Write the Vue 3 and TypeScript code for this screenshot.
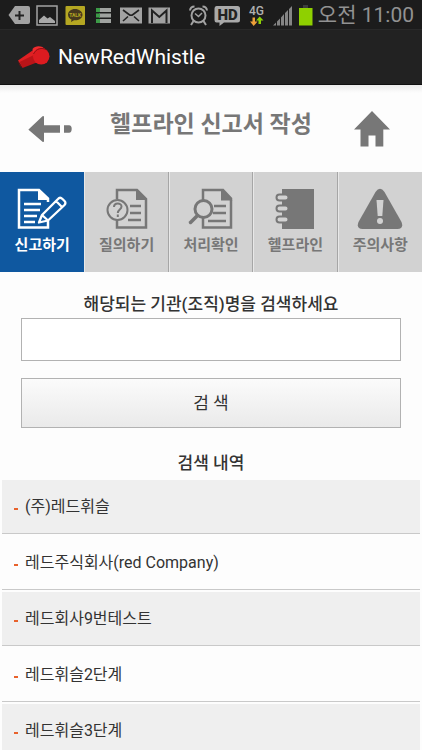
<script setup lang="ts">
import { ref } from 'vue'

type TabIcon = 'write' | 'question' | 'review' | 'notebook' | 'warning'

interface Tab {
  label: string
  icon: TabIcon
}

const tabs: Tab[] = [
  { label: '신고하기', icon: 'write' },
  { label: '질의하기', icon: 'question' },
  { label: '처리확인', icon: 'review' },
  { label: '헬프라인', icon: 'notebook' },
  { label: '주의사항', icon: 'warning' },
]

const results: string[] = [
  '(주)레드휘슬',
  '레드주식회사(red Company)',
  '레드회사9번테스트',
  '레드휘슬2단계',
  '레드휘슬3단계',
]

const activeTab = ref<TabIcon>('write')
const query = ref('')
</script>

<template>
  <div class="screen">
    <div class="status">
      <div class="status-left">
        <svg width="22" height="28" viewBox="8 0 22 28">
          <path d="M15 5H28Q30 5 30 7V21Q30 23 28 23H15L8.500 14Z" fill="#a2a2a2" />
          <path d="M19.500 10v9M15 14.500h9" stroke="#222" stroke-width="2" />
        </svg>
        <svg width="22" height="28" viewBox="36 0 22 28">
          <rect x="37" y="5" width="20" height="19" fill="none" stroke="#a2a2a2" stroke-width="1.500" />
          <path d="M39 22V19L44 14.500L47.500 17.500L50 16L55 20V22Z" fill="#a8a8a8" />
        </svg>
        <svg width="22" height="28" viewBox="64 0 22 28">
          <rect x="65.500" y="5" width="19.500" height="19" rx="1" fill="#b5a722" />
          <path d="M75 8C71 8 68 10.500 68 13.700C68 16 69.500 17.700 71.500 18.600L71 21L74 19.300C79 19.600 82.500 17 82.500 13.700C82.500 10.500 79 8 75 8Z" fill="#46391e" />
          <text x="75.200" y="16" class="talk" text-anchor="middle">TALK</text>
        </svg>
        <svg width="22" height="28" viewBox="92 0 22 28">
          <path d="M99 7h12v4H99zM99 12.500h12v4H99zM99 18h12v4H99z" fill="#a0a3a0" />
          <path d="M96 7h4v4h-4zM96 12.500h4v4h-4zM96 18h4v4h-4z" fill="#3d9b48" />
        </svg>
        <svg width="22" height="28" viewBox="120 0 22 28">
          <rect x="120" y="6.500" width="22" height="16" fill="#a2a2a2" />
          <path d="M123 9L129 13.500Q131 15 133 13.500L139 9M123 20L128 15.500M139 20L134 15.500" fill="none" stroke="#222" stroke-width="1.600" />
        </svg>
        <svg width="22" height="28" viewBox="148 0 22 28">
          <rect x="148.500" y="6.500" width="21.500" height="16" fill="#a2a2a2" />
          <path d="M152 22V9.500L159.300 16L166.500 9.500V22" fill="none" stroke="#222" stroke-width="2" />
        </svg>
      </div>
      <div class="status-right">
        <svg width="21" height="28" viewBox="190 0 21 28" fill="none" stroke="#a2a2a2">
          <circle cx="200.500" cy="14.500" r="7" stroke-width="2" />
          <path d="M192 9.500Q192.500 5.500 196.500 5.500M209 9.500Q208.500 5.500 204.500 5.500M195.500 20L193 24M205.500 20L208 24" stroke-width="2" />
          <path d="M197 12.500L200.500 15.500L204 12" stroke-width="1.500" />
        </svg>
        <svg width="27" height="28" viewBox="216 0 27 28">
          <path d="M218.500 5H239.500Q242 5 242 7.500V19Q242 21.500 239.500 21.500H226L221.500 25V21.500H218.500Q216.500 21.500 216.500 19V7.500Q216.500 5 218.500 5Z" fill="#a9a9a9" />
          <text x="229.500" y="19" class="hd" text-anchor="middle">HD</text>
        </svg>
        <svg width="21" height="28" viewBox="246 0 21 28">
          <text x="256.500" y="13.500" class="network" text-anchor="middle">4G</text>
          <path d="M252.500 16.500h2.500v4h2.500L253.700 25L250 20.500h2.500z" fill="#eda13a" />
          <path d="M258.500 23h2.500v-3.500h2.500L259.700 15.500L256 19.500h2.500z" fill="#8ed006" />
        </svg>
        <svg width="21" height="28" viewBox="274 0 21 28">
          <path d="M275 24.500L278 21.500V24.500ZM279 20.500L282 17.500V24.500H279ZM283 16.500L286 13V24.500H283ZM287 12L290 9V24.500H287ZM291 8L294 5V24.500H291Z" fill="#858585" />
        </svg>
        <svg width="15" height="28" viewBox="299 0 15 28">
          <path d="M304 4h5v3h-5z" fill="#3c3c3c" />
          <path d="M300 7h13.500v17.500H300z" fill="#8fd000" />
        </svg>
        <time class="clock">오전 11:00</time>
      </div>
    </div>

    <div class="appbar">
      <svg width="34" height="26" viewBox="16 0 34 26">
        <path d="M18 16.500L34 5.500L41 16L22 22.500Z" fill="#e02023" />
        <path d="M19.500 18L35 10.500L38 18L22.500 24Z" fill="#b91418" />
        <path d="M17.500 16.500L22.500 24L20 22Z" fill="#7d0c10" />
        <path d="M32.500 5C34.500 2 39 1.500 42.500 3L47 7L34 13Z" fill="#f12b2d" />
        <circle cx="41.200" cy="12.300" r="8.300" fill="#dc1b20" />
        <path d="M33.500 10C36 4.500 42 3 46.500 6" fill="none" stroke="#8f1014" />
      </svg>
      <span class="app-name">NewRedWhistle</span>
    </div>

    <main class="content">
      <header class="page-head">
        <button type="button" class="icon-button" aria-label="뒤로">
          <svg width="44" height="28" viewBox="0 0 44 28" fill="#777">
            <path d="M1 14L14.500 1.200Q16 .5 16 2V10.300H32V17.700H16V26Q16 27.500 14.500 26.800L.800 15Q0 14.500 1 14Z" />
            <path d="M36 10.300H41Q43.700 10.300 43.700 14Q43.700 17.700 41 17.700H36Z" />
          </svg>
        </button>
        <h1 class="page-title">헬프라인 신고서 작성</h1>
        <button type="button" class="icon-button" aria-label="홈">
          <svg width="36" height="36" viewBox="0 0 36 36" fill="#777">
            <path d="M18 0L36 18.500H29.300V35.500H21.500V24.500H14.500V35.500H6.500V18.500H0Z" />
          </svg>
        </button>
      </header>

      <nav class="tabs">
        <button
          v-for="tab in tabs"
          :key="tab.icon"
          type="button"
          class="tab"
          :class="{ active: tab.icon === activeTab }"
          @click="activeTab = tab.icon"
        >
          <svg v-if="tab.icon === 'write'" width="50" height="42" viewBox="0 0 50 42" fill="none" stroke="currentColor" stroke-width="2.500">
            <path d="M31 14V10.500L22 2H2V39.500H31V33" />
            <path d="M21 1L32 12H21Z" fill="currentColor" stroke="none" />
            <path d="M7 16H24M7 22H23M7 28H20M7 34H18" />
            <path d="M22 34.500L25 27L41 11Q43 8.500 45.500 11L47.500 13Q49.500 15 47 17.500L31 32.500ZM25 27L31 32.500M39 13L45 19" stroke-width="2.300" stroke-linejoin="round" />
          </svg>
          <svg v-else-if="tab.icon === 'question'" width="42" height="42" viewBox="0 0 42 42" fill="none" stroke="currentColor" stroke-width="2.500">
            <path d="M11 11V2H31L40 11V39.500H11V32" />
            <path d="M30 1L41 12H30Z" fill="currentColor" stroke="none" />
            <path d="M24 18H35M24 25H35M22 32H35" />
            <circle cx="11.500" cy="22" r="10" stroke-width="2" />
            <path d="M8 19C8 14.500 15.500 14.500 15.500 18.500C15.500 21.500 11.800 21.500 11.800 25M11.800 26.500V29" stroke-width="2" />
          </svg>
          <svg v-else-if="tab.icon === 'review'" width="46" height="42" viewBox="0 0 46 42" fill="none" stroke="currentColor" stroke-width="2.500">
            <path d="M15 12V2H35L43 10.500V39.500H15V29" />
            <path d="M33 1L44.500 12.500H33Z" fill="currentColor" stroke="none" />
            <path d="M26 18H38M25 25H38M20 33H38" />
            <circle cx="15.500" cy="21" r="8.500" stroke-width="3" />
            <path d="M9.500 27.500L2.500 34.500" stroke-width="3.500" stroke-linecap="round" />
          </svg>
          <svg v-else-if="tab.icon === 'notebook'" width="40" height="42" viewBox="0 0 40 42">
            <path d="M7 1H39V41H7Z" fill="currentColor" />
            <g fill="#d2d2d2" stroke="currentColor" stroke-width="2">
              <rect x="1.500" y="6.500" width="12" height="6" rx="3" />
              <rect x="1.500" y="17.500" width="12" height="6" rx="3" />
              <rect x="1.500" y="28.500" width="12" height="6" rx="3" />
            </g>
          </svg>
          <svg v-else width="46" height="42" viewBox="0 0 46 42">
            <path d="M18.500 4Q23 -2.500 27.500 4L44.500 34Q47 40.500 40.500 41H5.500Q-1 40.500 1.500 34Z" fill="currentColor" />
            <path d="M19.500 12H26.500L25.300 28H20.700Z" fill="#d2d2d2" />
            <circle cx="23" cy="33" r="3" fill="#d2d2d2" />
          </svg>
          <span>{{ tab.label }}</span>
        </button>
      </nav>

      <form class="search" @submit.prevent>
        <label class="caption" for="organization">해당되는 기관(조직)명을 검색하세요</label>
        <input id="organization" v-model="query" class="search-input" type="text" />
        <button type="submit" class="search-button">검 색</button>
      </form>

      <section>
        <h2 class="caption results-title">검색 내역</h2>
        <ul class="results">
          <li v-for="name in results" :key="name">
            <a href="#" class="result"><span class="dash"></span>{{ name }}</a>
          </li>
        </ul>
      </section>
    </main>
  </div>
</template>

<style>
body {
  margin: 0;
  background: #fdfdfd;
}
</style>

<style scoped>
.screen {
  display: flex;
  flex-direction: column;
  height: 100vh;
  overflow: hidden;
  font-family: Roboto, "Noto Sans CJK KR", sans-serif;
  color: #333;
}

button {
  font-family: inherit;
  margin: 0;
  cursor: pointer;
}

svg {
  display: block;
  flex: none;
}

.status {
  display: flex;
  flex: none;
  justify-content: space-between;
  align-items: center;
  box-sizing: border-box;
  height: 29px;
  padding: 0 8px;
  background: #1c1c1c;
}

.status-left {
  display: flex;
  gap: 6px;
}

.status-right {
  display: flex;
  align-items: center;
  gap: 5px;
}

.clock {
  font-size: 21px;
  line-height: 28px;
  color: #929292;
  white-space: nowrap;
}

.talk {
  font-size: 5px;
  font-weight: 700;
  fill: #b5a722;
}

.hd {
  font-size: 15px;
  font-weight: 900;
  fill: #222;
}

.network {
  font-size: 12px;
  font-weight: 500;
  fill: #b0b0b0;
}

.appbar {
  display: flex;
  flex: none;
  align-items: center;
  gap: 8px;
  box-sizing: border-box;
  height: 56px;
  padding: 0 16px;
  border-top: 1px solid #292929;
  border-bottom: 1px solid #111;
  background: #222;
}

.app-name {
  font-size: 21px;
  line-height: 28px;
  color: #fff;
}

.content {
  flex: 1;
  min-height: 0;
  overflow-y: auto;
  scrollbar-width: none;
}

.page-head {
  display: grid;
  grid-template-columns: 44px 1fr 44px;
  align-items: center;
  box-sizing: border-box;
  height: 87px;
  padding: 0 28px;
  background: linear-gradient(#ececec, #fdfdfd 8px);
}

.icon-button {
  display: flex;
  justify-content: center;
  padding: 0;
  border: 0;
  background: none;
}

.page-title {
  margin: 0;
  padding-bottom: 8px;
  font-size: 23px;
  line-height: 32px;
  font-weight: 700;
  text-align: center;
  white-space: nowrap;
  color: #777;
}

.tabs {
  display: grid;
  grid-template-columns: repeat(5, 1fr);
}

.tab {
  display: flex;
  flex-direction: column;
  align-items: center;
  gap: 4px;
  box-sizing: border-box;
  height: 100px;
  padding: 16px 0 0;
  border: 0;
  border-left: 1px solid #e8e8e8;
  border-right: 1px solid #a6a6a6;
  background: #d2d2d2;
  font-size: 15px;
  line-height: 22px;
  font-weight: 700;
  color: #777;
}

.tab:last-child {
  border-right: 0;
}

.tab.active {
  border-color: #0f58a0;
  background: #0f58a0;
  color: #fff;
}

.search {
  display: flex;
  flex-direction: column;
  padding: 20px 21px 0;
}

.caption {
  margin: 0;
  font-size: 17px;
  line-height: 24px;
  font-weight: 500;
  text-align: center;
  color: #333;
}

.search-input {
  box-sizing: border-box;
  width: 100%;
  height: 43px;
  margin: 2px 0 17px;
  padding: 0 10px;
  border: 1px solid #b2b2b2;
  border-radius: 0;
  background: #fff;
  font-family: inherit;
  font-size: 17px;
  color: #333;
}

.search-button {
  height: 50px;
  padding: 0;
  border: 1px solid #b2b2b2;
  background: linear-gradient(#fbfbfb, #eaeaea);
  font-size: 17px;
  line-height: 24px;
  color: #333;
}

.results-title {
  padding: 23px 0 5px;
}

.results {
  display: flex;
  flex-direction: column;
  gap: 2px;
  margin: 0;
  padding: 0 2px;
  list-style: none;
}

.results li {
  border-bottom: 1px solid #c9c9c9;
}

.results li:nth-child(odd) {
  background: #efefef;
}

.result {
  display: flex;
  align-items: center;
  gap: 7px;
  height: 53px;
  padding: 0 12px;
  font-size: 16px;
  line-height: 24px;
  text-decoration: none;
  color: #333;
}

.dash {
  width: 4px;
  height: 2px;
  margin-top: 4px;
  background: #e8622c;
}
</style>
